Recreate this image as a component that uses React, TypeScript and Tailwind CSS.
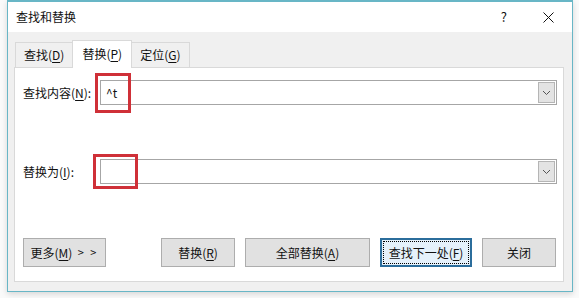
import type { ReactNode } from "react";

const font = { fontFamily: '"Noto Sans CJK SC", "Noto Sans", sans-serif' };

function U({ children }: { children: ReactNode }) {
  return <span className="underline underline-offset-2 decoration-1">{children}</span>;
}

function Tab({ active, children }: { active?: boolean; children: ReactNode }) {
  return active ? (
    <div className="relative z-10 -mb-px flex h-[28px] items-center border border-b-0 border-[#d9d9d9] bg-white px-[9px] pb-[2px]">
      {children}
    </div>
  ) : (
    <div className="flex h-[25px] items-center border border-b-0 border-[#d9d9d9] bg-[#f0f0f0] px-[8px] first:-mr-px last:-ml-px">
      {children}
    </div>
  );
}

function Combo({ value, mark }: { value?: string; mark: string }) {
  return (
    <div className="relative flex h-[25px] flex-1 border border-[#a6a6a6] bg-white">
      <div className="flex flex-1 items-center pl-[5px] text-[12px]">{value}</div>
      <div className="m-px flex w-[17px] items-center justify-center border border-[#b5b5b5] bg-[#e3e3e3]">
        <svg width="9" height="6" viewBox="0 0 9 6">
          <path d="M1 1 L4.5 4.5 L8 1" fill="none" stroke="#555" strokeWidth="1" />
        </svg>
      </div>
      <div className={`pointer-events-none absolute border-[3px] border-[#cf3038] ${mark}`} />
    </div>
  );
}

function Btn({ w, focus, children }: { w: string; focus?: boolean; children: ReactNode }) {
  return focus ? (
    <div className={`flex h-[29px] ${w} items-center justify-center border-2 border-[#2b6d9c] bg-[#e5f1fb] p-px`}>
      <div className="flex h-full w-full items-center justify-center border border-dotted border-black">
        {children}
      </div>
    </div>
  ) : (
    <div className={`flex h-[29px] ${w} items-center justify-center border border-[#adadad] bg-[#e1e1e1]`}>
      {children}
    </div>
  );
}

export default function App() {
  return (
    <div className="h-[298px] w-[579px] overflow-hidden bg-[#fafafa] pl-[7px] pr-[6px] text-[12px] text-[#111]" style={font}>
      <div className="flex h-[292px] flex-col border border-t-2 border-[#68b6c6] shadow-[0_2px_6px_rgba(0,0,0,0.15)]">
        <div className="flex h-[30px] items-center bg-white pl-[8px]">
          <span className="text-[12px]">查找和替换</span>
          <span className="ml-auto text-[13px]">?</span>
          <svg className="ml-[36px] mr-[18px]" width="11" height="11" viewBox="0 0 11 11">
            <path d="M0.5 0.5 L10.5 10.5 M10.5 0.5 L0.5 10.5" stroke="#111" strokeWidth="1" />
          </svg>
        </div>
        <div className="flex flex-1 flex-col bg-[#f0f0f0] pb-[9px] pl-[6px] pr-[8px] pt-[8px]">
          <div className="flex items-end pl-px">
            <Tab>
              查找(<U>D</U>)
            </Tab>
            <Tab active>
              替换(<U>P</U>)
            </Tab>
            <Tab>
              定位(<U>G</U>)
            </Tab>
          </div>
          <div className="flex flex-1 flex-col border border-[#d9d9d9] bg-white pl-[8px] pr-[6px] pt-[12px]">
            <div className="flex items-center">
              <div className="w-[77px]">
                查找内容(<U>N</U>):
              </div>
              <Combo value="^t" mark="-left-[6px] -top-[8px] h-[40px] w-[36px]" />
            </div>
            <div className="mt-[54px] flex items-center">
              <div className="w-[77px]">
                替换为(<U>I</U>):
              </div>
              <Combo mark="-left-[8px] -top-[6px] h-[35px] w-[45px]" />
            </div>
            <div className="mt-[54px] flex items-center pr-px">
              <Btn w="w-[83px]">
                更多(<U>M</U>)&nbsp;&nbsp;<span className="text-[11px] tracking-[2px]">&gt; &gt;</span>
              </Btn>
              <div className="ml-auto flex gap-[10px]">
                <Btn w="w-[74px]">
                  替换(<U>R</U>)
                </Btn>
                <Btn w="w-[125px]">
                  全部替换(<U>A</U>)
                </Btn>
                <Btn w="w-[92px]" focus>
                  查找下一处(<U>F</U>)
                </Btn>
                <Btn w="w-[74px]">关闭</Btn>
              </div>
            </div>
          </div>
        </div>
      </div>
    </div>
  );
}
